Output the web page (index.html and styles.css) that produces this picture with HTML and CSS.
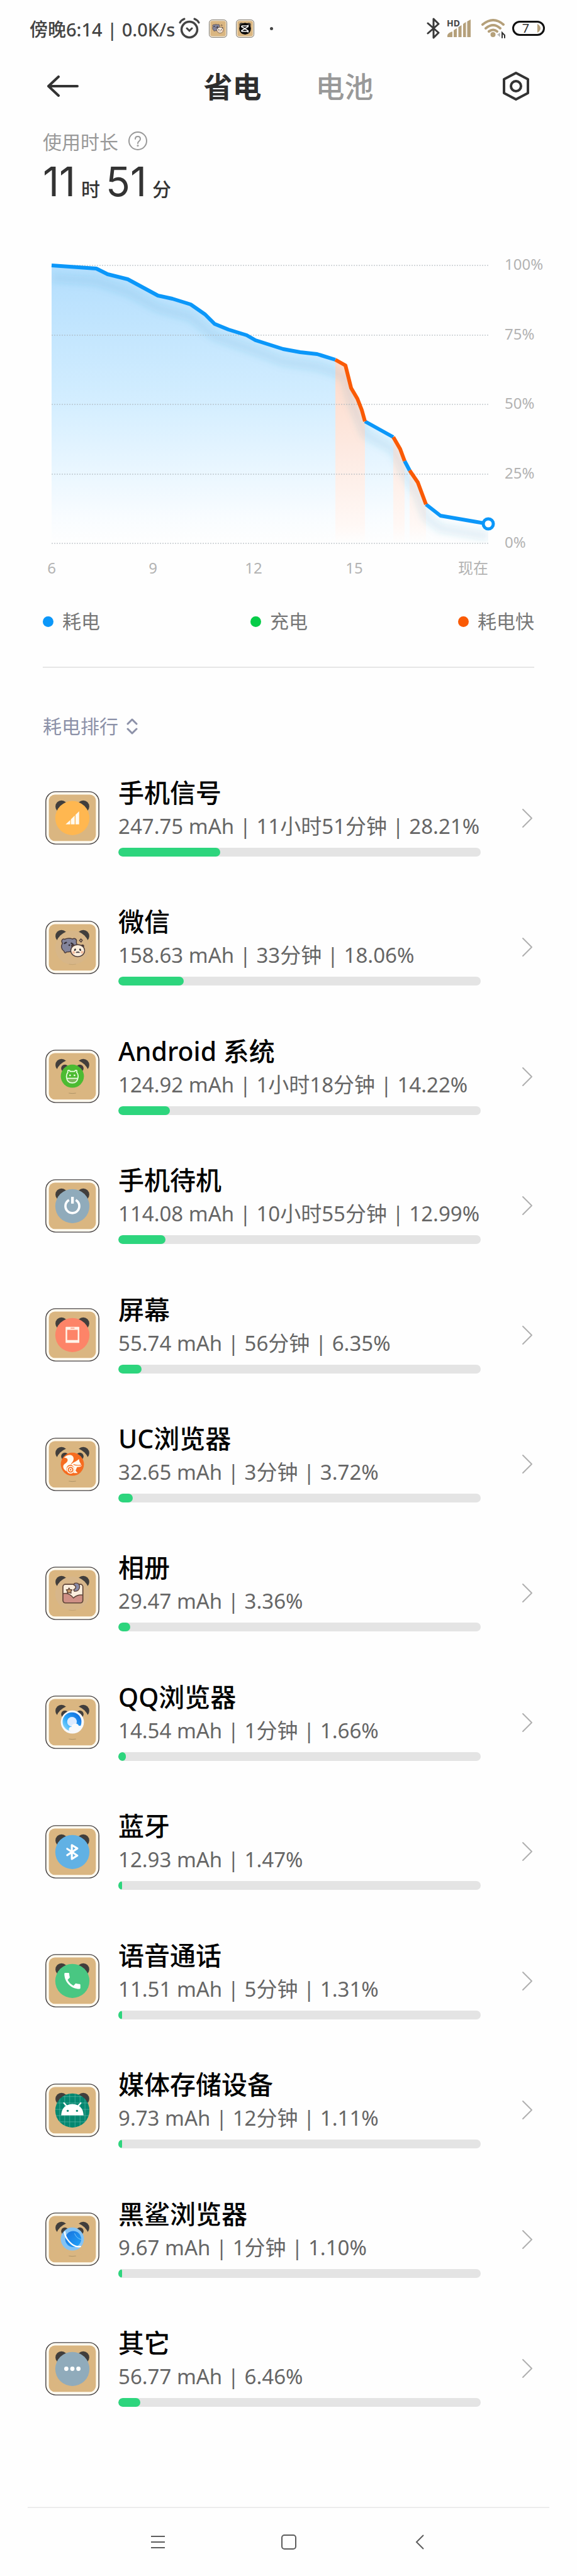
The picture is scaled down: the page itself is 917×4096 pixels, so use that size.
FILE: index.html
```html
<!DOCTYPE html>
<html lang="zh-CN">
<head>
<meta charset="utf-8">
<meta name="viewport" content="width=device-width, initial-scale=1">
<title>省电</title>
<link rel="stylesheet" href="styles.css">
</head>
<body>
<svg class="defs" aria-hidden="true">
  <defs>
    <linearGradient id="qq-blue" x1="0" y1="1" x2="1" y2="0">
      <stop offset="0" stop-color="#9fe4fd"/><stop offset=".45" stop-color="#2aa5f8"/><stop offset="1" stop-color="#0a5fd8"/>
    </linearGradient>
    <linearGradient id="globe-blue" x1="0" y1="0" x2="1" y2="1">
      <stop offset="0" stop-color="#1671dc"/><stop offset="1" stop-color="#22a4fb"/>
    </linearGradient>
    <clipPath id="face-clip"><circle cx="152" cy="151" r="96"/></clipPath>
    <clipPath id="photo-clip"><rect x="99" y="99" width="112" height="105" rx="12"/></clipPath>
  </defs>
  <symbol id="frame" viewBox="0 0 304 300">
    <rect x="3" y="3" width="298" height="294" rx="55" fill="#fffaf0" stroke="#444041" stroke-width="5"/>
    <rect x="20" y="19" width="264" height="261" rx="34" fill="#dab681"/>
    <circle cx="91" cy="86" r="34" fill="#413e3c"/>
    <circle cx="213" cy="86" r="34" fill="#413e3c"/>
  </symbol>
  <symbol id="small-face" viewBox="0 0 304 300">
    <circle cx="152" cy="151" r="96" fill="#dab681"/>
    <circle cx="110" cy="105" r="21" fill="#413e3c"/>
    <circle cx="194" cy="105" r="21" fill="#413e3c"/>
    <path d="M132 244q20 4 40 0" fill="none" stroke="#8d7a55" stroke-width="2"/>
  </symbol>
  <symbol id="pandas" viewBox="0 0 304 300">
    <path d="M96 126C86 112 98 98 108 104C122 98 142 98 153 103C166 94 180 106 174 120C182 138 176 160 160 172L118 176C114 184 106 180 106 172C90 160 88 142 96 126Z" fill="#83849b" stroke="#4b3b3a" stroke-width="5"/>
    <path d="M108 127l10-5m28 4l10 6" stroke="#332d33" stroke-width="8" stroke-linecap="round"/>
    <circle cx="135" cy="137" r="5" fill="#332d33"/>
    <circle cx="154" cy="140" r="9" fill="#4b3b3a"/><circle cx="209" cy="142" r="9" fill="#4b3b3a"/>
    <ellipse cx="182" cy="168" rx="39" ry="34" fill="#fbeedd" stroke="#4b3b3a" stroke-width="5"/>
    <circle cx="159" cy="178" r="8" fill="#f1bd9f"/><circle cx="207" cy="177" r="8" fill="#f1bd9f"/>
    <path d="M168 161l-2 4m29-4l2 4" stroke="#332d33" stroke-width="9" stroke-linecap="round"/>
    <path d="M173 180q5-7 9-2q5-5 10 2" fill="none" stroke="#332d33" stroke-width="5"/>
    <path d="M200 102l8 8l-7 10l-9-9Z" fill="none" stroke="#4b3b3a" stroke-width="5"/>
  </symbol>
  <symbol id="chevron" viewBox="0 0 18 32">
    <path d="M2 2L16 16L2 30" fill="none" stroke="#b0b0b0" stroke-width="2" stroke-linecap="round" stroke-linejoin="round"/>
  </symbol>
</svg>

<div class="status">
  <div class="status-left">
    <span class="status-text">傍晚6:14 | 0.0K/s</span>
    <svg class="alarm" viewBox="0 0 34 34" fill="none" stroke="#444" stroke-linecap="round"><circle cx="17" cy="19" r="12.500" stroke-width="3.500"/><path d="M2 8Q4 4 9 2M32 8Q30 4 25 2" stroke-width="3"/><path d="M13 17l4 4l4-4" stroke-width="3"/></svg>
    <svg class="mini first" viewBox="0 0 304 300"><rect x="5" y="5" width="294" height="290" rx="50" fill="#fffaf0" stroke="#5c5344" stroke-width="9"/><rect x="22" y="21" width="260" height="258" rx="32" fill="#dab681"/><use href="#pandas" transform="translate(-68 -60) scale(1.400)"/></svg>
    <svg class="mini" viewBox="0 0 304 300"><rect x="5" y="5" width="294" height="290" rx="50" fill="#fffaf0" stroke="#5c5344" stroke-width="9"/><rect x="22" y="21" width="260" height="258" rx="32" fill="#dab681"/><circle cx="91" cy="86" r="34" fill="#413e3c"/><circle cx="213" cy="86" r="34" fill="#413e3c"/><circle cx="152" cy="151" r="98" fill="#070707"/><path d="M94 105H190L210 92M94 105V118L210 190M94 197H190L210 210M94 197V184L210 112" fill="none" stroke="#fff" stroke-width="17"/></svg>
    <i class="dot"></i>
  </div>
  <div class="status-right">
    <svg class="bt" viewBox="0 0 22 34" fill="none" stroke="#3a3a3a" stroke-width="3" stroke-linecap="round" stroke-linejoin="round"><path d="M2 9L19 24L11 32V2L19 10L2 25"/></svg>
    <svg class="cell" viewBox="0 0 38 30" fill="#b5a07a"><path d="M1 29V26Q2 22 9 20V29ZM11 29V18L16 15V29ZM18.500 29V13L23.500 10V29ZM26 29V8L30.500 5V29ZM32.500 29V4L38 1V29Z"/><text x="0" y="12" class="hd">HD</text></svg>
    <svg class="wifi" viewBox="0 0 40 32" fill="none" stroke="#b5a07a" stroke-width="4" stroke-linecap="round"><path d="M3 10Q20-4 36 10M8 16Q20 6 31 16M13 21Q20 16 26 21"/><circle cx="19.500" cy="26" r="4" fill="#b5a07a" stroke="none"/><path d="M31 23V30L26 26Z" fill="#bbb" stroke="none"/><path d="M34 31V23L38 27V31" stroke="#333" stroke-width="2"/></svg>
    <div class="battery"><span>7</span><svg viewBox="0 0 5 14"><path d="M0 0V14Q5 11 5 7Q5 3 0 0Z" fill="#b5a07a"/></svg></div>
  </div>
</div>

<header class="header">
  <button class="icon-btn" aria-label="返回"><svg class="back" viewBox="0 0 50 34" fill="none" stroke="#333" stroke-width="4" stroke-linecap="round" stroke-linejoin="round"><path d="M48 17H2M18 2L2 17L18 32"/></svg></button>
  <nav class="tabs"><a class="tab active" href="#saving">省电</a><a class="tab" href="#battery">电池</a></nav>
  <button class="icon-btn end" aria-label="设置"><svg class="gear" viewBox="0 0 44 48" fill="none" stroke="#333" stroke-width="4" stroke-linejoin="round"><path d="M22 3L41 13V35L22 45L3 35V13Z"/><circle cx="22" cy="24" r="8"/></svg></button>
</header>

<main class="main">
  <section class="summary">
    <div class="label">使用时长 <button class="help" aria-label="说明"><svg viewBox="0 0 30 30" fill="none" stroke="#999" stroke-width="2"><circle cx="15" cy="15" r="14"/><path d="M11 12Q11 8 15 8Q19 8 19 12Q19 14 17 15.500Q15 17 15 19" stroke-linecap="round"/><circle cx="15" cy="22.500" r=".6"/></svg></button></div>
    <div class="duration"><b>11</b><span>时</span><b>51</b><span>分</span></div>
  </section>

  <svg class="chart" viewBox="0 0 917 540" role="img" aria-label="电量曲线">
    <defs>
      <linearGradient id="fill-blue" gradientUnits="userSpaceOnUse" x1="0" y1="32" x2="0" y2="474"><stop offset="0" stop-color="#b3defd"/><stop offset=".5" stop-color="#d4eeff"/><stop offset=".9" stop-color="#f8fcff"/><stop offset="1" stop-color="#fefefe"/></linearGradient>
      <linearGradient id="fill-orange" gradientUnits="userSpaceOnUse" x1="0" y1="182" x2="0" y2="474"><stop offset="0" stop-color="#fdd9c8"/><stop offset=".5" stop-color="#fdeae2"/><stop offset=".9" stop-color="#fff8f5"/><stop offset="1" stop-color="#fefefe"/></linearGradient>
      <path id="area" d="M82 32L153 37L171 46L203 54L227 67L251 80L274 85L303 94L326 110L341 125L363 134L392 143L406 151L450 165L477 170L504 173L533 182L549 191L558 227L568 244L575 262L580 280L625 305L636 324L643 343L651 358L664 377L677 412L700 430L758 440L776 443V474H82Z"/>
      <clipPath id="area-clip"><use href="#area"/></clipPath>
      <filter id="soft" x="-10%" y="-10%" width="120%" height="120%"><feGaussianBlur stdDeviation="6"/></filter>
    </defs>
    <use href="#area" fill="url(#fill-blue)"/>
    <g clip-path="url(#area-clip)">
      <path d="M533 0H580V474H533ZM625 0H643V474H625ZM651 0H677V474H651Z" fill="url(#fill-orange)"/>
      <path d="M82 52L153 57L203 74L251 100L303 114L341 145L392 163L450 185L504 193L533 202L549 211L558 247L580 300L625 325L643 363L664 397L677 432L700 450L776 463" fill="none" stroke="#3a8fc0" stroke-opacity=".14" stroke-width="12" filter="url(#soft)"/>
    </g>
    <path d="M82 32H776M82 143H776M82 253H776M82 364H776M82 474H776" stroke="#a9b2b8" stroke-width="1" stroke-dasharray="2 2"/>
    <g fill="none" stroke-width="6" stroke-linejoin="round">
      <path d="M82 32L153 37L171 46L203 54L227 67L251 80L274 85L303 94L326 110L341 125L363 134L392 143L406 151L450 165L477 170L504 173L533 182M580 280L625 305M643 343L651 358M677 412L700 430L758 440L776 443" stroke="#0b97f9"/>
      <path d="M533 182L549 191L558 227L568 244L575 262L580 280M625 305L636 324L643 343M651 358L664 377L677 412" stroke="#fa5a05"/>
      <circle cx="776" cy="443" r="8" fill="#fff" stroke="#0b97f9" stroke-width="5"/>
    </g>
    <g class="axis">
      <text x="802" y="39">100%</text><text x="802" y="150">75%</text><text x="802" y="260">50%</text><text x="802" y="371">25%</text><text x="802" y="481">0%</text>
      <g text-anchor="middle"><text x="82" y="522">6</text><text x="243" y="522">9</text><text x="403" y="522">12</text><text x="563" y="522">15</text></g>
      <text x="776" y="522" text-anchor="end">现在</text>
    </g>
  </svg>

  <ul class="legend"><li class="use">耗电</li><li class="charge">充电</li><li class="fast">耗电快</li></ul>
  <hr class="rule">

  <button class="sort">耗电排行 <svg viewBox="0 0 18 26" fill="none" stroke="#8c91a8" stroke-width="3" stroke-linecap="round" stroke-linejoin="round"><path d="M2 9L9 2L16 9M2 17L9 24L16 17"/></svg></button>

  <ul class="list">
    <li><a class="row" href="#signal">
      <svg class="app" viewBox="0 0 304 300"><use href="#frame"/><circle cx="152" cy="151" r="96" fill="#ffb750"/><path d="M114 186L140 162V186ZM144 186V158L165 137V186ZM170 186V132L190 113V186Z" fill="#fffaf0"/></svg>
      <div class="info"><h2>手机信号</h2><p>247.75 mAh | 11小时51分钟 | 28.21%</p><div class="bar"><i style="width:28.21%"></i></div></div>
      <svg class="chev"><use href="#chevron"/></svg></a></li>
    <li><a class="row" href="#wechat">
      <svg class="app" viewBox="0 0 304 300"><use href="#frame"/><circle cx="152" cy="151" r="96" fill="#d7b688"/><path d="M132 244q20 4 40 0" fill="none" stroke="#b59767" stroke-width="2"/><use href="#pandas"/></svg>
      <div class="info"><h2>微信</h2><p>158.63 mAh | 33分钟 | 18.06%</p><div class="bar"><i style="width:18.06%"></i></div></div>
      <svg class="chev"><use href="#chevron"/></svg></a></li>
    <li><a class="row" href="#android">
      <svg class="app" viewBox="0 0 304 300"><use href="#frame"/><use href="#small-face"/><circle cx="152" cy="149" r="65" fill="#4cbb32"/><path d="M120 160H184Q181 187 152 187Q123 187 120 160Z" fill="#7cb55c"/><path d="M127 127Q123 116 132 116Q139 117 139 122H165Q166 116 173 116Q181 118 176 127Q186 138 184 155Q181 187 152 187Q122 187 119 155Q118 138 127 127ZM119 161H185" fill="none" stroke="#e9ffe0" stroke-width="6"/><circle cx="139" cy="144" r="5" fill="#efffe9"/><circle cx="164" cy="144" r="5" fill="#efffe9"/></svg>
      <div class="info"><h2>Android 系统</h2><p>124.92 mAh | 1小时18分钟 | 14.22%</p><div class="bar"><i style="width:14.22%"></i></div></div>
      <svg class="chev"><use href="#chevron"/></svg></a></li>
    <li><a class="row" href="#standby">
      <svg class="app" viewBox="0 0 304 300"><use href="#frame"/><circle cx="152" cy="151" r="96" fill="#90abbb"/><path d="M133 117A39 39 0 1 0 171 117" fill="none" stroke="#fff" stroke-width="13"/><rect x="145" y="99" width="15" height="38" fill="#fff"/></svg>
      <div class="info"><h2>手机待机</h2><p>114.08 mAh | 10小时55分钟 | 12.99%</p><div class="bar"><i style="width:12.99%"></i></div></div>
      <svg class="chev"><use href="#chevron"/></svg></a></li>
    <li><a class="row" href="#screen">
      <svg class="app" viewBox="0 0 304 300"><use href="#frame"/><circle cx="152" cy="151" r="96" fill="#fd8468"/><path fill-rule="evenodd" d="M117 105H188Q191 105 191 108V192Q191 195 188 195H117Q114 195 114 192V108Q114 105 117 105ZM123 122V179H182V122ZM142 110V115H164V110Z" fill="#fff3e8"/></svg>
      <div class="info"><h2>屏幕</h2><p>55.74 mAh | 56分钟 | 6.35%</p><div class="bar"><i style="width:6.35%"></i></div></div>
      <svg class="chev"><use href="#chevron"/></svg></a></li>
    <li><a class="row" href="#uc">
      <svg class="app" viewBox="0 0 304 300"><use href="#frame"/><use href="#small-face"/><circle cx="152" cy="149" r="65" fill="#f66c20"/><path d="M104 114C122 90 158 92 159 116C160 136 142 142 144 153C126 150 114 168 120 190C98 176 92 154 116 142C132 132 128 108 104 114Z" fill="#fffaf0"/><circle cx="142" cy="180" r="19" fill="none" stroke="#fffaf0" stroke-width="6"/><circle cx="142" cy="180" r="7" fill="none" stroke="#fffaf0" stroke-width="5"/><path d="M143 152C158 136 176 134 189 119L192 134L205 157C196 166 186 163 178 166L170 185L182 199H158C170 182 162 156 143 152Z" fill="#fffaf0"/><path d="M158 150Q174 158 203 154" fill="none" stroke="#f66c20" stroke-width="4"/></svg>
      <div class="info"><h2>UC浏览器</h2><p>32.65 mAh | 3分钟 | 3.72%</p><div class="bar"><i style="width:4%"></i></div></div>
      <svg class="chev"><use href="#chevron"/></svg></a></li>
    <li><a class="row" href="#gallery">
      <svg class="app" viewBox="0 0 304 300"><use href="#frame"/><circle cx="152" cy="151" r="96" fill="#d7b68a"/><path d="M132 244q20 4 40 0" fill="none" stroke="#b59767" stroke-width="2"/><rect x="99" y="99" width="112" height="105" rx="14" fill="#fbeedd"/><g clip-path="url(#photo-clip)"><path d="M97 152Q132 142 158 176Q182 154 214 160V208H97Z" fill="#cf9086" stroke="#5e4438" stroke-width="5"/></g><rect x="99" y="99" width="112" height="105" rx="14" fill="none" stroke="#5e4438" stroke-width="6"/><path d="M133 120l6 9l11 1l-6 9l1 10l-11-3l-11 3l1-11l-6-8l11-1Z" fill="#c79a6b" stroke="#5e4438" stroke-width="5" stroke-linejoin="round"/><path d="M166 93Q190 88 193 112Q192 138 164 139L159 130Q184 114 158 101Z" fill="#888ba9" stroke="#5e4438" stroke-width="5" stroke-linejoin="round"/></svg>
      <div class="info"><h2>相册</h2><p>29.47 mAh | 3.36%</p><div class="bar"><i style="width:3.36%"></i></div></div>
      <svg class="chev"><use href="#chevron"/></svg></a></li>
    <li><a class="row" href="#qq">
      <svg class="app" viewBox="0 0 304 300"><use href="#frame"/><use href="#small-face"/><circle cx="152" cy="149" r="65" fill="#f8f9fa"/><circle cx="150" cy="147" r="53" fill="url(#qq-blue)"/><circle cx="150" cy="147" r="27" fill="#dcebff"/><path d="M132 192Q132 176 147 176Q150 158 169 158Q184 158 189 170Q204 168 205 181Q194 206 164 203Q134 202 132 192Z" fill="#f8f9fa"/></svg>
      <div class="info"><h2>QQ浏览器</h2><p>14.54 mAh | 1分钟 | 1.66%</p><div class="bar"><i style="width:2%"></i></div></div>
      <svg class="chev"><use href="#chevron"/></svg></a></li>
    <li><a class="row" href="#bluetooth">
      <svg class="app" viewBox="0 0 304 300"><use href="#frame"/><circle cx="152" cy="151" r="96" fill="#61b1e4"/><path d="M123 133L180 171L149 190V112L180 131L123 169" fill="none" stroke="#fff" stroke-width="11" stroke-linejoin="round" stroke-linecap="round"/></svg>
      <div class="info"><h2>蓝牙</h2><p>12.93 mAh | 1.47%</p><div class="bar"><i style="width:1%"></i></div></div>
      <svg class="chev"><use href="#chevron"/></svg></a></li>
    <li><a class="row" href="#call">
      <svg class="app" viewBox="0 0 304 300"><use href="#frame"/><circle cx="152" cy="151" r="96" fill="#49c782"/><path transform="translate(92 91) scale(5)" d="M6.620 10.790c1.440 2.830 3.760 5.140 6.590 6.590l2.200-2.200c.27-.27.67-.36 1.020-.24 1.120.37 2.330.57 3.570.57.55 0 1 .45 1 1V20c0 .55-.45 1-1 1-9.390 0-17-7.610-17-17 0-.55.45-1 1-1h3.500c.55 0 1 .45 1 1 0 1.250.2 2.450.57 3.570.11.35.03.74-.25 1.020l-2.200 2.200z" fill="#fff"/></svg>
      <div class="info"><h2>语音通话</h2><p>11.51 mAh | 5分钟 | 1.31%</p><div class="bar"><i style="width:1%"></i></div></div>
      <svg class="chev"><use href="#chevron"/></svg></a></li>
    <li><a class="row" href="#media">
      <svg class="app" viewBox="0 0 304 300"><use href="#frame"/><circle cx="152" cy="151" r="96" fill="#058770"/><g clip-path="url(#face-clip)"><path d="M81 50V250M109 50V250M137 50V250M167 50V250M195 50V250M223 50V250M50 73H250M50 109H250M50 145H250M50 180H250M50 215H250" stroke="#6fbfb0" stroke-width="2"/></g><path d="M89 178Q93 118 152 115Q211 118 215 178Z" fill="#fff"/><path d="M105 109L122 128M199 109L182 128" stroke="#fff" stroke-width="8" stroke-linecap="round"/><circle cx="126" cy="153" r="6" fill="#058770"/><circle cx="178" cy="153" r="6" fill="#058770"/></svg>
      <div class="info"><h2>媒体存储设备</h2><p>9.73 mAh | 12分钟 | 1.11%</p><div class="bar"><i style="width:1%"></i></div></div>
      <svg class="chev"><use href="#chevron"/></svg></a></li>
    <li><a class="row" href="#shark">
      <svg class="app" viewBox="0 0 304 300"><use href="#frame"/><use href="#small-face"/><circle cx="152" cy="149" r="65" fill="#84c3f4"/><circle cx="157" cy="149" r="45" fill="url(#globe-blue)"/><path d="M164 117Q176 147 202 151" fill="none" stroke="#8bd0fb" stroke-width="3"/><path d="M110 110C106 136 150 202 197 191" fill="none" stroke="#fff" stroke-width="8" stroke-linecap="round"/></svg>
      <div class="info"><h2>黑鲨浏览器</h2><p>9.67 mAh | 1分钟 | 1.10%</p><div class="bar"><i style="width:1%"></i></div></div>
      <svg class="chev"><use href="#chevron"/></svg></a></li>
    <li><a class="row" href="#other">
      <svg class="app" viewBox="0 0 304 300"><use href="#frame"/><circle cx="152" cy="151" r="96" fill="#90abbb"/><g fill="#fff"><circle cx="118" cy="150" r="12"/><circle cx="152" cy="150" r="12"/><circle cx="186" cy="150" r="12"/></g></svg>
      <div class="info"><h2>其它</h2><p>56.77 mAh | 6.46%</p><div class="bar"><i style="width:6%"></i></div></div>
      <svg class="chev"><use href="#chevron"/></svg></a></li>
  </ul>
</main>

<nav class="navbar">
  <button aria-label="菜单"><svg viewBox="0 0 24 24" stroke="#5c5c5c" stroke-width="2" fill="none"><path d="M1 3H23M1 12H23M1 21H23"/></svg></button>
  <button aria-label="主页"><svg viewBox="0 0 24 24" stroke="#5c5c5c" stroke-width="2" fill="none"><rect x="1" y="1" width="22" height="22" rx="4"/></svg></button>
  <button aria-label="后退"><svg viewBox="0 0 24 24" stroke="#5c5c5c" stroke-width="2" fill="none"><path d="M18 1L7 12L18 23"/></svg></button>
</nav>
</body>
</html>
```

FILE: styles.css
```css
* { box-sizing: border-box; }
body {
  margin: 0;
  min-height: 100vh;
  display: flex;
  flex-direction: column;
  background: #fefefe;
  color: #333;
  font-family: "Noto Sans", "Noto Sans CJK SC", sans-serif;
}
h2, p, ul { margin: 0; padding: 0; }
ul { list-style: none; }
a { color: inherit; text-decoration: none; }
button { border: 0; padding: 0; background: none; font: inherit; color: inherit; }
svg { display: block; }
.defs { position: absolute; width: 0; height: 0; }

.status, .status-left, .status-right { display: flex; align-items: center; }
.status { height: 90px; justify-content: space-between; padding: 0 51px 0 47px; }
.status-text { font-size: 29px; font-weight: 500; color: #444; white-space: nowrap; }
.alarm { width: 34px; height: 34px; margin-left: 6px; }
.mini { width: 29px; height: 29px; margin-left: 14px; }
.dot { width: 5px; height: 5px; border-radius: 50%; background: #444; margin-left: 25px; }
.bt { width: 22px; height: 34px; }
.cell { width: 38px; height: 30px; margin-left: 10px; overflow: visible; }
.wifi { width: 40px; height: 32px; margin-left: 16px; }
.battery {
  width: 52px;
  height: 24px;
  margin-left: 10px;
  padding-right: 4px;
  display: grid;
  grid-template-columns: 1fr 5px;
  align-items: center;
  border: 3px solid #111;
  border-radius: 12px;
  font-size: 20px;
  line-height: 18px;
  text-align: center;
}
.battery svg { width: 5px; height: 14px; }
.hd { font-size: 14px; font-weight: 700; fill: #444; stroke: #fefefe; stroke-width: 2px; paint-order: stroke; }

.header {
  height: 94px;
  display: grid;
  grid-template-columns: 1fr auto 1fr;
  align-items: center;
  padding: 0 75px;
}
.icon-btn { justify-self: start; }
.icon-btn.end { justify-self: end; }
.back { width: 50px; height: 34px; }
.gear { width: 44px; height: 48px; }
.tabs { display: flex; gap: 86px; font-size: 46px; line-height: 60px; font-weight: 500; }
.tab { color: #999; }
.tab.active { color: #2e2e2e; font-weight: 700; }

.main { flex: 1; display: flex; flex-direction: column; }
.summary { padding: 20px 68px 0; }
.label { display: flex; align-items: center; gap: 16px; height: 40px; font-size: 30px; color: #999; }
.help svg { width: 30px; height: 30px; }
.duration { display: flex; align-items: baseline; gap: 9px; height: 80px; margin-top: 5px; line-height: 80px; }
.duration b { font-family: Inter, sans-serif; font-size: 64px; font-weight: 400; }
.duration span { font-size: 30px; font-weight: 500; }

.chart { width: 100%; height: auto; margin-top: 61px; }
.axis { font-size: 24px; fill: #b3b3b3; }

.legend { display: flex; justify-content: space-between; margin: 38px 68px 0; font-size: 30px; line-height: 40px; color: #777; }
.legend li { display: flex; align-items: center; gap: 14px; }
.legend li::before { content: ""; width: 17px; height: 17px; border-radius: 50%; background: currentColor; }
.legend .use::before { background: #0b97f9; }
.legend .charge::before { background: #06cc48; }
.legend .fast::before { background: #fa5a05; }
.rule { width: auto; height: 2px; margin: 52px 68px 0; border: 0; background: #e6e6e6; }

.sort { display: flex; align-items: center; align-self: flex-start; gap: 13px; margin: 73px 68px 0; font-size: 30px; line-height: 40px; color: #8c91a8; }
.sort svg { width: 18px; height: 26px; }

.list { flex: 1; display: grid; grid-auto-rows: 1fr; margin: 23px 0 117px; }
.row { height: 100%; display: grid; grid-template-columns: 86px 1fr 18px; align-items: center; padding: 0 70px 0 72px; }
.app { width: 86px; height: 85px; }
.info { margin: 0 65px 8px 30px; }
.info h2 { font-size: 41px; line-height: 56px; font-weight: 500; color: #000; }
.info p { margin-top: 4px; font-size: 33px; line-height: 44px; color: #666; white-space: nowrap; }
.bar { height: 14px; margin-top: 12px; border-radius: 7px; background: #e4e4e4; overflow: hidden; }
.bar i { display: block; height: 100%; border-radius: 7px; background: #2dd57d; }
.chev { width: 18px; height: 32px; }

.navbar { height: 110px; display: flex; justify-content: center; align-items: center; gap: 160px; margin: 0 44px; border-top: 2px solid #ececec; }
.navbar button { width: 48px; height: 48px; display: grid; place-items: center; }
.navbar svg { width: 24px; height: 24px; }
```
